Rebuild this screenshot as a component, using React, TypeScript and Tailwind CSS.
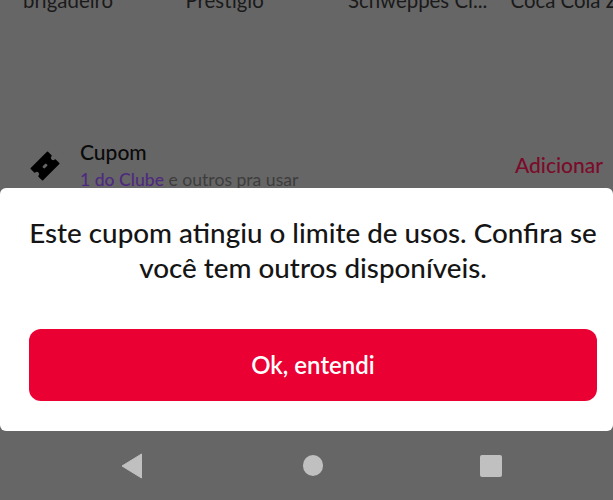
const font = { fontFamily: '"Lato", "Liberation Sans", sans-serif' };

const products = ['brigadeiro', 'Prestígio', 'Schweppes Ci...', 'Coca Cola Z'];

function TicketIcon() {
  return (
    <svg width="32" height="32" viewBox="0 0 32 32" className="rotate-[-45deg]">
      <path
        d="M4.5 8h23v5a3 3 0 0 0 0 6v5h-23v-5a3 3 0 0 0 0-6z"
        fill="#000"
        stroke="#000"
        strokeWidth="1.5"
        strokeLinejoin="round"
      />
      <rect x="13.5" y="14.5" width="5" height="3" rx="1" fill="#666" />
    </svg>
  );
}

export default function App() {
  return (
    <div className="h-[500px] w-[613px] overflow-hidden bg-[#666666] flex flex-col" style={font}>
      <div className="h-[188px] shrink-0 overflow-hidden">
        <div className="mt-[-14px] flex pl-[23px] text-[20.4px] leading-[28px] text-[#1a1a1a]">
          {products.map((p) => (
            <div key={p} className="w-[162.5px] shrink-0 whitespace-nowrap">
              {p}
            </div>
          ))}
        </div>
        <div className="mt-[125px] flex items-start pl-[29px] pr-[10px]">
          <div className="mt-[11px] w-[32px] shrink-0">
            <TicketIcon />
          </div>
          <div className="ml-[19px] flex-1">
            <div className="text-[21px] leading-[26px] font-medium text-[#0a0a0a]">Cupom</div>
            <div className="mt-[3px] text-[17.6px] leading-[24px] text-[#3d3d3d]">
              <span className="font-medium text-[#4e2a7f]">1 do Clube</span> e outros pra usar
            </div>
          </div>
          <div className="mt-[13px] text-[21px] leading-[26px] font-medium text-[#7c0a2a]">Adicionar</div>
        </div>
      </div>

      <div className="h-[243px] shrink-0 rounded-[6px] bg-white pl-[29px] pr-[16px] pt-[27px]">
        <p className="text-center text-[27.8px] leading-[35px] font-medium text-[#151515]">
          Este cupom atingiu o limite de usos. Confira se você tem outros disponíveis.
        </p>
        <button className="mt-[44px] flex h-[72px] w-full items-center justify-center rounded-[12px] bg-[#ea0033] text-[24px] font-semibold text-white">
          Ok, entendi
        </button>
      </div>

      <div className="flex flex-1 items-center pl-[121px]">
        <div className="flex w-[381px] items-center justify-between">
          <svg width="22" height="26" viewBox="0 0 22 26">
            <path d="M20.5 1 L1 13 L20.5 25 Z" fill="#c0c0c0" stroke="#c0c0c0" strokeWidth="1" strokeLinejoin="round" />
          </svg>
          <div className="ml-[3px] h-[21px] w-[20px] rounded-full bg-[#c0c0c0]" />
          <div className="h-[22px] w-[22px] rounded-[2px] bg-[#c0c0c0]" />
        </div>
      </div>
    </div>
  );
}
